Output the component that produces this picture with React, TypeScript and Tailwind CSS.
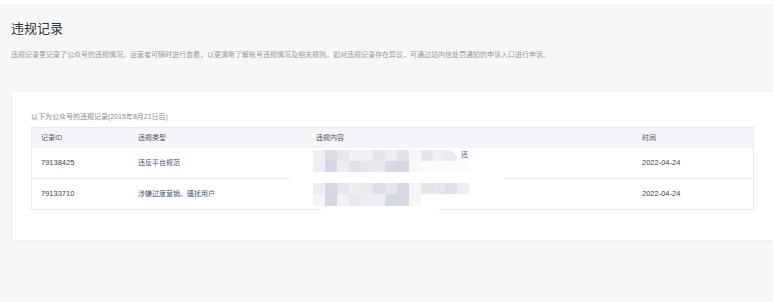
import React from "react";

const font = { fontFamily: '"Liberation Sans", "Noto Sans CJK SC", sans-serif' };

const r1a = ["#eff0f4", "#d9dbe6", "#e8e8ee", "#eef0f3", "#eef0f3", "#e4e5eb", "#eceef2", "#e1e3ea", "#f6f7f9", "#e6e7ec", "#eeeff3", "#e9eaef"];
const r1b = ["#eeeff3", "#d6d8e4", "#ecedf1", "#e0e2ea", "#e6e8ee", "#e9e9ee", "#d7d9e5", "#d4d7e3", "#f8f8fa", "#fbfbfc", "#fbfbfc", "#fbfbfc", "#fbfbfc"];
const r2a = ["#eceef2", "#d6d8e4", "#e6e6ec", "#eceef2", "#e8eaef", "#dcdfe8", "#e6e7ec", "#d6d9e5", "#f4f5f7", "#e4e5ea", "#e6e7ec", "#dfe1e9", "#eceef2"];
const r2b = ["#f4f5f7", "#d4d6e2", "#f1f2f5", "#e8e9ee", "#eceef2", "#eceef2", "#d6d8e4", "#d6d8e4", "#f5f6f8"];

function Strip({ colors, h }: { colors: string[]; h: number }) {
  return (
    <div className="flex">
      {colors.map((c, i) => (
        <div key={i} className="w-[12px]" style={{ height: h, background: c }} />
      ))}
    </div>
  );
}

const rows = [
  { id: "79138425", type: "违反平台规范", time: "2022-04-24", h: "h-[31px]" },
  { id: "79133710", type: "涉嫌过度营销、骚扰用户", time: "2022-04-24", h: "h-[30px]" },
];

export default function App() {
  return (
    <div className="w-[773px] h-[302px] overflow-hidden bg-[#f6f7f9]" style={font}>
      <div className="h-[4px] bg-white" />
      <div className="pl-[11px] pt-[16px]">
        <div className="text-[13px] leading-[16px] text-[#333]" style={{ fontFamily: '"Noto Sans CJK SC", sans-serif' }}>违规记录</div>
        <div className="mt-[14px] text-[7px] leading-[10px] text-[#999]">
          违规记录里记录了公众号的违规情况，运营者可随时进行查看，以更清晰了解帐号违规情况及相关规则。如对违规记录存在异议，可通过站内信处罚通知的申诉入口进行申诉。
        </div>
      </div>
      <div className="ml-[11px] mt-[31px] w-[762px] bg-white border-t border-b border-l border-[#eef0f2] px-[19px] pt-[20px] pb-[30px]">
        <div className="text-[7px] leading-[10px] text-[#8a8a8a] mb-[5px]">以下为公众号的违规记录(2015年8月21日后)</div>
        <div className="relative border border-[#e8e9ee]">
          <div className="grid grid-cols-[97px_178px_326px_1fr] h-[20px] items-center bg-[#f4f5f9] text-[7px] text-[#555]">
            <div className="pl-[9px]">记录ID</div>
            <div className="pl-[9px]">违规类型</div>
            <div className="pl-[9px]">违规内容</div>
            <div className="pl-[9px]">时间</div>
          </div>
          {rows.map((r, i) => (
            <div
              key={r.id}
              className={`grid grid-cols-[97px_178px_326px_1fr] items-center ${r.h} ${i === 0 ? "border-b border-[#e8e9ee]" : ""}`}
            >
              <div className="pl-[9px] text-[7.5px] text-[#444]">{r.id}</div>
              <div className="pl-[9px] text-[7px] text-[#465382]">{r.type}</div>
              <div />
              <div className="pl-[9px] text-[7.5px] text-[#444]">{r.time}</div>
            </div>
          ))}
          <div className="absolute left-[258px] top-[44px] w-[214px] h-[10px] rounded-full bg-white blur-[1px]" />
          <div className="absolute left-[288px] top-[80px] w-[120px] h-[12px] rounded-full bg-white blur-[1px]" />
          <div className="absolute left-[281px] top-[22px]">
            <div className="flex items-start">
              <div className="rounded-tr-[10px] overflow-hidden">
                <Strip colors={r1a} h={11} />
              </div>
              <span className="ml-[4px] text-[7px] leading-[10px] text-[#465382]">还</span>
            </div>
            <Strip colors={r1b} h={11} />
          </div>
          <div className="absolute left-[281px] top-[55px]">
            <Strip colors={r2a} h={11} />
            <Strip colors={r2b} h={12} />
          </div>
        </div>
      </div>
    </div>
  );
}
